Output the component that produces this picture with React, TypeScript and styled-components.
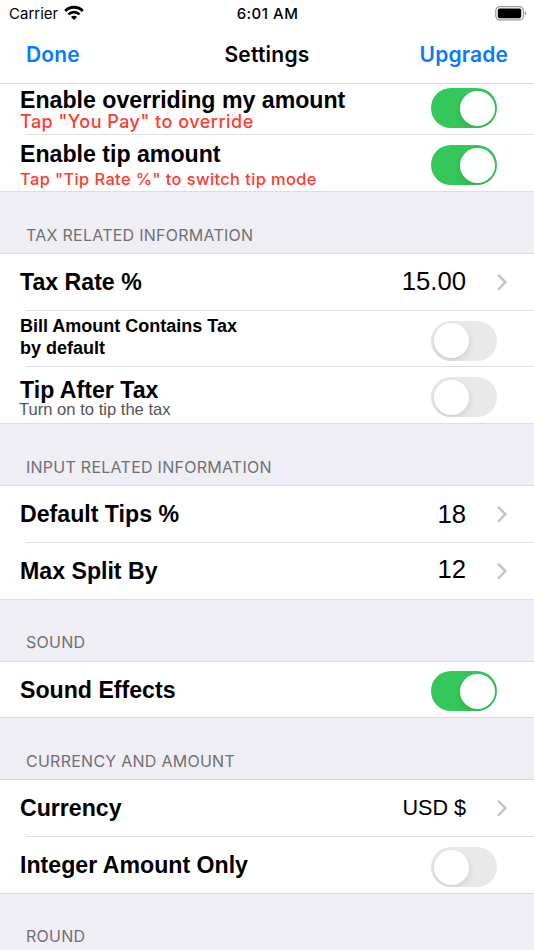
import React from 'react';
import styled, { createGlobalStyle } from 'styled-components';

const GlobalStyle = createGlobalStyle`
  * { box-sizing: border-box; }
  html, body { margin: 0; background: #efeef4; overflow: hidden; }
`;

const sf = 'Inter, Roboto, sans-serif';
const helvetica = '"Liberation Sans", Arial, sans-serif';

const Screen = styled.main`
  width: 534px;
  height: 950px;
  overflow: hidden;
  background: #efeef4;
  color: #000;
  font-family: ${sf};
`;

const StatusBar = styled.div`
  display: grid;
  grid-template-columns: 1fr auto 1fr;
  height: 28px;
  padding: 4px 8px 0 9px;
  background: #fff;
  font-size: 15px;
  line-height: 20px;
`;

const Carrier = styled.div`
  display: flex;
  gap: 6px;
  svg { margin-top: 1px; }
`;

const Clock = styled.div`
  font-weight: 500;
  letter-spacing: 0.5px;
`;

const Battery = styled.div`
  display: flex;
  justify-content: flex-end;
  padding-top: 2px;
  svg { margin-right: -1px; }
`;

const NavBar = styled.header`
  display: grid;
  grid-template-columns: 1fr auto 1fr;
  height: 56px;
  padding: 13px 26px 0 26px;
  background: #fff;
  border-bottom: 1px solid #dcdcdf;
  font-size: 21px;
  line-height: 28px;
`;

const NavAction = styled.button<{ $end?: boolean }>`
  align-self: start;
  justify-self: ${(p) => (p.$end ? 'end' : 'start')};
  padding: 0;
  border: 0;
  background: none;
  color: #077aff;
  font: 600 21px/28px ${sf};
  letter-spacing: 0.15px;
`;

const NavTitle = styled.h1`
  margin: 0;
  font-size: 21px;
  line-height: 28px;
  font-weight: 600;
  letter-spacing: 0.22px;
`;

const SectionTitle = styled.h2<{ $top?: number }>`
  height: 62px;
  margin: 0;
  padding: ${(p) => p.$top ?? 33}px 26px 0;
  border-bottom: 1px solid #dddce1;
  color: #707075;
  font-size: 16px;
  line-height: 20px;
  font-weight: 400;
  letter-spacing: 0.26px;
`;

const Row = styled.div<{ $height: number }>`
  display: flex;
  align-items: flex-start;
  height: ${(p) => p.$height - 1}px;
  padding: 0 37px 0 20px;
  background: #fff;
`;

const DividerTrack = styled.div`
  height: 1px;
  padding-left: 26px;
  background: #fff;
`;

const Divider = styled.div`
  height: 1px;
  background: #dfdfe1;
`;

const GroupEnd = styled.div`
  height: 1px;
  background: #dddce1;
`;

const Labels = styled.div<{ $top: number }>`
  flex: 1;
  padding-top: ${(p) => p.$top}px;
  white-space: nowrap;
`;

const Title = styled.div`
  height: 24px;
  font: 700 23.15px/24px ${helvetica};
`;

const SmallTitle = styled.div`
  font: 700 18px/22px ${helvetica};
`;

const Hint = styled.div<{ $size: number; $spacing: number; $gap?: number }>`
  margin-top: ${(p) => p.$gap ?? 0}px;
  color: #ff3a30;
  font-size: ${(p) => p.$size}px;
  line-height: 20px;
  font-weight: 550;
  letter-spacing: ${(p) => p.$spacing}px;
`;

const Caption = styled.div`
  margin-left: -1px;
  color: #555;
  font: 400 16.6px/16px ${helvetica};
`;

const Value = styled.div<{ $top: number; $size?: number }>`
  padding-top: ${(p) => p.$top}px;
  margin-right: 31px;
  font: 400 ${(p) => p.$size ?? 25.7}px/30px ${helvetica};
`;

const ChevronBox = styled.div`
  height: 17px;
  width: 10px;
  margin: 20px -10px 0 0;
  svg { display: block; }
`;

const Switch = styled.button<{ $on?: boolean; $top: number }>`
  display: flex;
  justify-content: ${(p) => (p.$on ? 'flex-end' : 'flex-start')};
  width: 66px;
  height: 40px;
  margin-top: ${(p) => p.$top}px;
  padding: 2.5px;
  border: 0;
  border-radius: 20px;
  background: ${(p) => (p.$on ? '#35c759' : '#e9e9eb')};
  overflow: hidden;
`;

const Thumb = styled.span`
  width: 35px;
  height: 35px;
  border-radius: 50%;
  background: #fff;
  box-shadow: 0 3px 7px rgba(0, 0, 0, 0.12);
`;

function Toggle({ on, top }: { on?: boolean; top: number }) {
  return (
    <Switch role="switch" aria-checked={!!on} $on={on} $top={top}>
      <Thumb />
    </Switch>
  );
}

function Chevron() {
  return (
    <ChevronBox>
      <svg width="10" height="17" viewBox="0 0 10 17" fill="none" stroke="#c4c4c7" strokeWidth="2.4" strokeLinecap="round" strokeLinejoin="miter">
        <path d="M1.7 1.4 L8.4 8.2 L1.7 15" />
      </svg>
    </ChevronBox>
  );
}

function InsetDivider() {
  return (
    <DividerTrack>
      <Divider />
    </DividerTrack>
  );
}

function WifiIcon() {
  return (
    <svg width="20" height="16" viewBox="0 0 20 16" fill="none" stroke="#000">
      <path d="M1.2 6 C6.1 1 13.9 1 18.8 6" strokeWidth="2.8" />
      <path d="M4.4 9.4 C7.5 6.3 12.5 6.3 15.6 9.4" strokeWidth="2.6" />
      <path d="M10 15 L6.9 12 C8.6 10.4 11.4 10.4 13.1 12 Z" fill="#000" stroke="none" />
    </svg>
  );
}

function BatteryIcon() {
  return (
    <svg width="32" height="15" viewBox="0 0 32 15">
      <rect x="0.8" y="0.7" width="27.6" height="13.2" rx="4" fill="none" stroke="#999" strokeWidth="1.2" />
      <rect x="2.8" y="2.4" width="23.4" height="9.8" rx="1.8" fill="#000" />
      <path d="M29.8 5 C31.5 5.7 31.5 8.9 29.8 9.6 Z" fill="#999" />
    </svg>
  );
}

export default function App() {
  return (
    <Screen>
      <GlobalStyle />
      <StatusBar>
        <Carrier>
          Carrier
          <WifiIcon />
        </Carrier>
        <Clock>6:01 AM</Clock>
        <Battery>
          <BatteryIcon />
        </Battery>
      </StatusBar>
      <NavBar>
        <NavAction>Done</NavAction>
        <NavTitle>Settings</NavTitle>
        <NavAction $end>Upgrade</NavAction>
      </NavBar>

      <Row $height={51}>
        <Labels $top={4}>
          <Title>Enable overriding my amount</Title>
          <Hint $size={18} $spacing={0.48}>Tap "You Pay" to override</Hint>
        </Labels>
        <Toggle on top={4} />
      </Row>
      <InsetDivider />
      <Row $height={57}>
        <Labels $top={7}>
          <Title>Enable tip amount</Title>
          <Hint $size={16.4} $spacing={0.41} $gap={3}>Tap "Tip Rate %" to switch tip mode</Hint>
        </Labels>
        <Toggle on top={10} />
      </Row>
      <GroupEnd />

      <SectionTitle>TAX RELATED INFORMATION</SectionTitle>
      <Row $height={57}>
        <Labels $top={16}>
          <Title>Tax Rate %</Title>
        </Labels>
        <Value $top={12}>15.00</Value>
        <Chevron />
      </Row>
      <InsetDivider />
      <Row $height={56}>
        <Labels $top={4}>
          <SmallTitle>
            Bill Amount Contains Tax
            <br />
            by default
          </SmallTitle>
        </Labels>
        <Toggle top={9.5} />
      </Row>
      <InsetDivider />
      <Row $height={57}>
        <Labels $top={11}>
          <Title>Tip After Tax</Title>
          <Caption>Turn on to tip the tax</Caption>
        </Labels>
        <Toggle top={10} />
      </Row>
      <GroupEnd />

      <SectionTitle>INPUT RELATED INFORMATION</SectionTitle>
      <Row $height={57}>
        <Labels $top={16}>
          <Title>Default Tips %</Title>
        </Labels>
        <Value $top={13}>18</Value>
        <Chevron />
      </Row>
      <InsetDivider />
      <Row $height={57}>
        <Labels $top={16}>
          <Title>Max Split By</Title>
        </Labels>
        <Value $top={11}>12</Value>
        <Chevron />
      </Row>
      <GroupEnd />

      <SectionTitle $top={32}>SOUND</SectionTitle>
      <Row $height={56}>
        <Labels $top={16}>
          <Title>Sound Effects</Title>
        </Labels>
        <Toggle on top={9} />
      </Row>
      <GroupEnd />

      <SectionTitle>CURRENCY AND AMOUNT</SectionTitle>
      <Row $height={57}>
        <Labels $top={16}>
          <Title>Currency</Title>
        </Labels>
        <Value $top={13} $size={21.6}>USD $</Value>
        <Chevron />
      </Row>
      <InsetDivider />
      <Row $height={57}>
        <Labels $top={16}>
          <Title>Integer Amount Only</Title>
        </Labels>
        <Toggle top={10} />
      </Row>
      <GroupEnd />

      <SectionTitle $top={32}>ROUND</SectionTitle>
    </Screen>
  );
}
